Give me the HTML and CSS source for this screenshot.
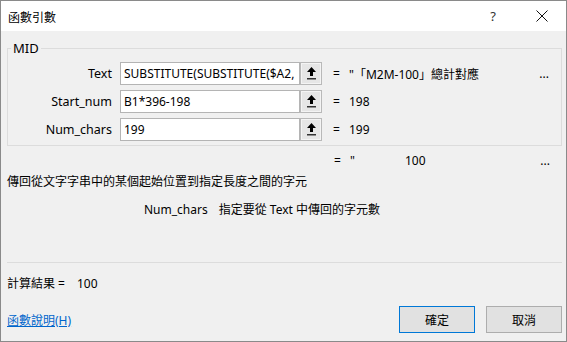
FILE: index.html
```html
<!DOCTYPE html>
<html lang="zh-TW">
<head>
    <meta charset="UTF-8">
    <title>函數引數</title>
    <link rel="stylesheet" href="styles.css">
</head>
<body>
    <div class="dialog">
        <div class="titlebar">
            <span class="title">函數引數</span>
            <span class="help">?</span>
            <span class="close">
                <svg width="12" height="12" viewBox="0 0 12 12"><path d="M0.5 0.5 L11.5 11.5 M11.5 0.5 L0.5 11.5" stroke="#111" stroke-width="1" fill="none"/></svg>
            </span>
        </div>

        <div class="body">
            <fieldset class="group">
                <legend>MID</legend>

                <div class="arg-row">
                    <label class="arg-label">Text</label>
                    <div class="field">
                        <input type="text" value="SUBSTITUTE(SUBSTITUTE($A2,">
                        <button class="ref-btn"><svg width="9" height="13" viewBox="0 0 9 13"><path d="M4.5 0 L9 5 L6 5 L6 9 L3 9 L3 5 L0 5 Z" fill="#000"/><rect x="0" y="11" width="9" height="1.5" fill="#333"/></svg></button>
                    </div>
                    <span class="eq">=</span>
                    <span class="val">"「M2M-100」總計對應</span>
                    <span class="more">...</span>
                </div>

                <div class="arg-row">
                    <label class="arg-label">Start_num</label>
                    <div class="field">
                        <input type="text" value="B1*396-198">
                        <button class="ref-btn"><svg width="9" height="13" viewBox="0 0 9 13"><path d="M4.5 0 L9 5 L6 5 L6 9 L3 9 L3 5 L0 5 Z" fill="#000"/><rect x="0" y="11" width="9" height="1.5" fill="#333"/></svg></button>
                    </div>
                    <span class="eq">=</span>
                    <span class="val">198</span>
                </div>

                <div class="arg-row">
                    <label class="arg-label">Num_chars</label>
                    <div class="field">
                        <input type="text" value="199">
                        <button class="ref-btn"><svg width="9" height="13" viewBox="0 0 9 13"><path d="M4.5 0 L9 5 L6 5 L6 9 L3 9 L3 5 L0 5 Z" fill="#000"/><rect x="0" y="11" width="9" height="1.5" fill="#333"/></svg></button>
                    </div>
                    <span class="eq">=</span>
                    <span class="val">199</span>
                </div>
            </fieldset>

            <div class="result-line">
                <span class="eq">=</span>
                <span class="val">"<span class="gap"></span>100</span>
                <span class="more">...</span>
            </div>

            <p class="desc">傳回從文字字串中的某個起始位置到指定長度之間的字元</p>
            <p class="arg-desc"><span class="arg-name">Num_chars</span>指定要從 Text 中傳回的字元數</p>

            <hr class="sep">

            <div class="calc">計算結果 =<span class="calc-val">100</span></div>

            <div class="footer">
                <a href="#" class="help-link">函數說明(H)</a>
                <div class="buttons">
                    <button class="btn btn-default">確定</button>
                    <button class="btn">取消</button>
                </div>
            </div>
        </div>
    </div>
</body>
</html>
```

FILE: styles.css
```css
body {
    margin: 0;
    font-family: "Noto Sans", "Noto Sans CJK TC", sans-serif;
    font-size: 12px;
    color: #000;
    background-color: #f0f0f0;
}

.dialog {
    width: 567px;
    height: 342px;
    box-sizing: border-box;
    border: 1px solid #8a8a8a;
    background-color: #f0f0f0;
    display: flex;
    flex-direction: column;
}

/* 標題列 */
.titlebar {
    height: 30px;
    background: #ffffff;
    display: flex;
    align-items: center;
    padding-left: 7px;
}

.title {
    font-family: "Noto Sans CJK TC", sans-serif;
    font-size: 12px;
    flex: 1;
}

.help {
    font-size: 13px;
    color: #333;
    margin-right: 40px;
}

.close {
    display: flex;
    margin-right: 18px;
}

.body {
    padding: 0 4px 0 6px;
}

/* 引數群組 */
.group {
    margin: 10px 0 0 0;
    padding: 6px 3px 4px 3px;
    border: 1px solid #dcdcdc;
}

.group legend {
    padding: 0 2px;
    font-size: 13px;
    line-height: 15px;
}

.arg-row {
    display: flex;
    align-items: center;
    height: 23px;
    margin-bottom: 5px;
}

.arg-row:last-child {
    margin-bottom: 0;
}

.arg-label {
    width: 101px;
    text-align: right;
    margin-right: 8px;
    font-size: 12.5px;
}

.field {
    display: flex;
    height: 23px;
}

.field input {
    width: 180px;
    height: 23px;
    box-sizing: border-box;
    border: 1px solid #b4b4b4;
    padding: 0 3px;
    font-family: inherit;
    font-size: 12px;
    background: #fff;
    outline: none;
}

.ref-btn {
    width: 22px;
    height: 23px;
    box-sizing: border-box;
    border: 1px solid #b9b9b9;
    box-shadow: inset 0 0 0 1px #f4f4f4;
    background: #e6e6e6;
    padding: 0;
    display: flex;
    align-items: center;
    justify-content: center;
}

.eq {
    width: 16px;
    margin-left: 11px;
}

.val {
    flex: 1;
    font-family: "Noto Sans", "Noto Sans CJK TC", sans-serif;
}

.more {
    margin-right: 9px;
}

/* 結果與說明 */
.result-line {
    display: flex;
    line-height: 16px;
    margin-top: 7px;
    padding-left: 327px;
    padding-right: 3px;
}

.result-line .eq {
    margin-left: 0;
}

.gap {
    display: inline-block;
    width: 50px;
}

.desc {
    margin: 4px 0 0 0;
    line-height: 16px;
    font-family: "Noto Sans CJK TC", sans-serif;
}

.arg-desc {
    margin: 13px 0 0 137px;
    line-height: 16px;
}

.arg-name {
    margin-right: 11px;
}

.sep {
    margin: 44px 0 0 0;
    border: none;
    border-top: 1px solid #dcdcdc;
    height: 0;
}

.calc {
    margin-top: 13px;
    line-height: 16px;
}

.calc-val {
    margin-left: 12px;
}

/* 底部按鈕 */
.footer {
    display: flex;
    align-items: center;
    justify-content: space-between;
    margin-top: 14px;
}

.help-link {
    color: #0066cc;
    font-size: 12px;
}

.buttons {
    display: flex;
    gap: 11px;
}

.btn {
    width: 76px;
    height: 27px;
    background-color: #e1e1e1;
    border: 1px solid #adadad;
    font-family: "Noto Sans CJK TC", sans-serif;
    font-size: 12px;
    color: #000;
    padding: 0;
}

.btn-default {
    border-color: #0078d7;
}
```
